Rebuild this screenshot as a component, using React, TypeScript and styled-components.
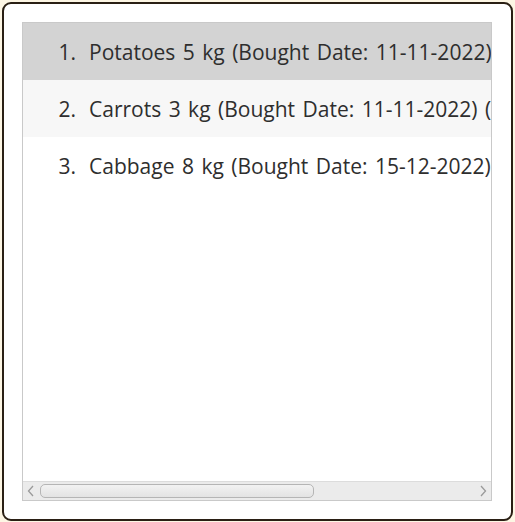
import React from 'react';
import styled, { createGlobalStyle } from 'styled-components';

const items = [
  { name: 'Potatoes', qty: '5 kg', date: '11-11-2022', extra: '' },
  { name: 'Carrots', qty: '3 kg', date: '11-11-2022', extra: ' (Used)' },
  { name: 'Cabbage', qty: '8 kg', date: '15-12-2022', extra: '' },
];

const App = () => {
  const selected = 0;
  return (
    <>
      <GlobalStyle />
      <Window>
        <ListView>
          <Rows>
            {items.map((item, i) => (
              <Row key={item.name} $selected={i === selected} $alt={i % 2 === 1}>
                <Index>{i + 1}.</Index>
                <Label>
                  {item.name} {item.qty} (Bought Date: {item.date}){item.extra}
                </Label>
              </Row>
            ))}
          </Rows>
          <ScrollBar>
            <Arrow>
              <svg width="8" height="12" viewBox="0 0 8 12">
                <path d="M6 1 L1.5 6 L6 11" fill="none" stroke="#9a9a9a" strokeWidth="1.3" />
              </svg>
            </Arrow>
            <Track>
              <Thumb />
            </Track>
            <Arrow>
              <svg width="8" height="12" viewBox="0 0 8 12">
                <path d="M2 1 L6.5 6 L2 11" fill="none" stroke="#9a9a9a" strokeWidth="1.3" />
              </svg>
            </Arrow>
          </ScrollBar>
        </ListView>
      </Window>
    </>
  );
};

export default App;

const GlobalStyle = createGlobalStyle`
  html, body {
    margin: 0;
    padding: 0;
    background: #fdf6e4;
  }
  body {
    padding: 2px 2px 1px 2px;
    font-family: 'Open Sans', 'Noto Sans', sans-serif;
  }
`;

const Window = styled.div`
  box-sizing: border-box;
  width: 511px;
  height: 519px;
  background: #ffffff;
  border: 2px solid #2a1f14;
  border-radius: 9px;
  padding: 18px 19px 18px 18px;
  display: flex;
`;

const ListView = styled.div`
  flex: 1;
  display: flex;
  flex-direction: column;
  border: 1px solid #c9c9c9;
  background: #ffffff;
  overflow: hidden;
`;

const Rows = styled.ol`
  flex: 1;
  margin: 0;
  padding: 0;
  list-style: none;
`;

const Row = styled.li<{ $selected: boolean; $alt: boolean }>`
  height: 57px;
  display: flex;
  align-items: center;
  white-space: nowrap;
  background: ${(p) => (p.$selected ? '#d3d3d3' : p.$alt ? '#f7f7f7' : '#ffffff')};
  font-size: 21px;
  color: #2e2e2e;
`;

const Index = styled.span`
  width: 53px;
  text-align: right;
  padding-right: 13px;
  flex: none;
`;

const Label = styled.span`
  flex: none;
  word-spacing: 2px;
`;

const ScrollBar = styled.div`
  height: 18px;
  display: flex;
  align-items: center;
  background: #ebebeb;
  border-top: 1px solid #dcdcdc;
`;

const Arrow = styled.div`
  width: 16px;
  display: flex;
  align-items: center;
  justify-content: center;
  flex: none;
`;

const Track = styled.div`
  flex: 1;
  height: 100%;
  display: flex;
  align-items: center;
`;

const Thumb = styled.div`
  box-sizing: border-box;
  width: 274px;
  height: 14px;
  margin-left: 1px;
  border: 1px solid #b5b5b5;
  border-radius: 5px;
  background: linear-gradient(#f2f2f2, #e3e3e3);
`;
